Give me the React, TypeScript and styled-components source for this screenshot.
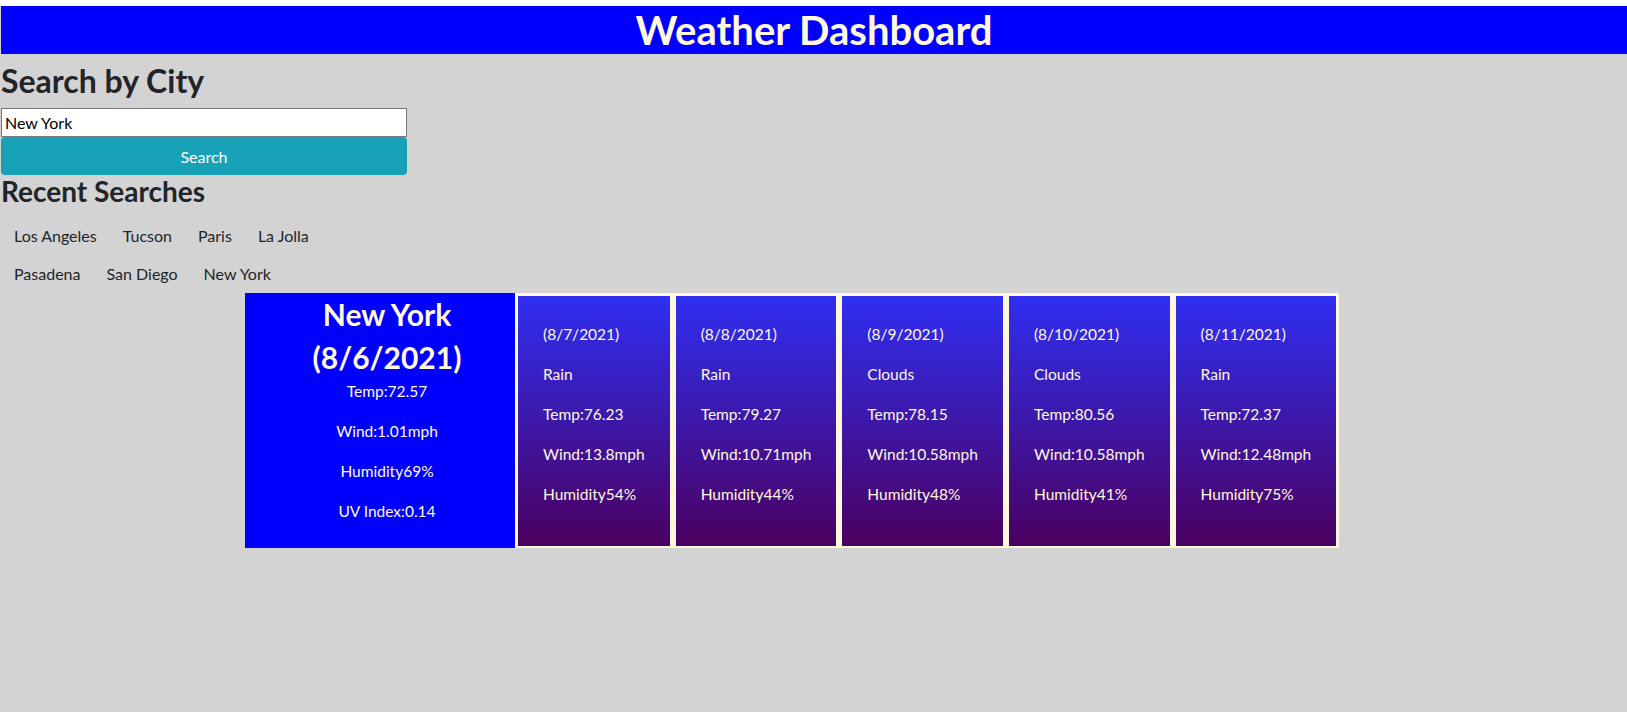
import styled, { createGlobalStyle } from "styled-components";

const GlobalStyle = createGlobalStyle`
  html, body {
    margin: 0;
    background: #ffffff;
  }
  body {
    font-family: Lato, "Open Sans", sans-serif;
    font-size: 16px;
    line-height: 1.5;
    color: #212529;
  }
`;

const Page = styled.div`
  margin-top: 6px;
  padding-left: 1px;
  min-height: calc(100vh - 6px);
  background: lightgrey;
  display: flow-root;
`;

const Header = styled.header`
  background: #0000ff;
  text-align: center;
`;

const Title = styled.h1`
  margin: 0;
  font-size: 40px;
  line-height: 48px;
  font-weight: 700;
  color: #fff8dc;
`;

const SearchColumn = styled.section`
  width: 406px;
  padding-top: 8px;
`;

const SectionTitle = styled.h2<{ $size: number }>`
  margin: 0 0 8px;
  font-size: ${(p) => p.$size}px;
  line-height: 1.2;
  font-weight: 700;
  color: #212529;
`;

const CityInput = styled.input`
  display: block;
  box-sizing: border-box;
  width: 100%;
  height: 29px;
  margin: 0;
  padding: 1px 3px;
  border: 1px solid #767676;
  font-family: Lato, "Open Sans", sans-serif;
  font-size: 16px;
  color: #000;
  background: #fff;
`;

const SearchButton = styled.button`
  display: block;
  width: 100%;
  height: 38px;
  border: 0;
  border-radius: 4px;
  background: #17a2b8;
  color: #fff;
  font-family: inherit;
  font-size: 16px;
`;

const RecentList = styled.div`
  display: flex;
  flex-wrap: wrap;
`;

const RecentButton = styled.button`
  height: 38px;
  padding: 6px 12px;
  border: 1px solid transparent;
  background: transparent;
  color: #212529;
  font-family: inherit;
  font-size: 16px;
  line-height: 24px;
`;

const WeatherRow = styled.div`
  display: flex;
  margin-left: 244px;
`;

const TodayCard = styled.div`
  width: 270px;
  box-sizing: border-box;
  padding-left: 14px;
  background: #0000ff;
  color: #fff8dc;
  text-align: center;
`;

const TodayTitle = styled.h2`
  margin: 0;
  font-size: 30px;
  line-height: 43px;
  font-weight: 700;
`;

const Line = styled.p`
  margin: 0 0 16px;
  line-height: 24px;
  font-size: 15.5px;
`;

const Forecast = styled.div`
  display: flex;
  background: #fff8dc;
`;

const ForecastCard = styled.div`
  margin: 3px 3px 2px;
  padding: 26px 25px 8px;
  padding-bottom: 24px;
  background: linear-gradient(to bottom, #2f2ff2, #4b005f);
  color: #fff8dc;
`;

const today = {
  city: "New York",
  date: "(8/6/2021)",
  temp: "72.57",
  wind: "1.01",
  humidity: "69",
  uv: "0.14",
};

const days = [
  { date: "(8/7/2021)", sky: "Rain", temp: "76.23", wind: "13.8", humidity: "54" },
  { date: "(8/8/2021)", sky: "Rain", temp: "79.27", wind: "10.71", humidity: "44" },
  { date: "(8/9/2021)", sky: "Clouds", temp: "78.15", wind: "10.58", humidity: "48" },
  { date: "(8/10/2021)", sky: "Clouds", temp: "80.56", wind: "10.58", humidity: "41" },
  { date: "(8/11/2021)", sky: "Rain", temp: "72.37", wind: "12.48", humidity: "75" },
];

const recent = ["Los Angeles", "Tucson", "Paris", "La Jolla", "Pasadena", "San Diego", "New York"];

export default function App() {
  return (
    <>
      <GlobalStyle />
      <Page>
        <Header>
          <Title>Weather Dashboard</Title>
        </Header>
        <SearchColumn>
          <SectionTitle $size={32}>Search by City</SectionTitle>
          <CityInput defaultValue="New York" />
          <SearchButton>Search</SearchButton>
          <SectionTitle $size={28}>Recent Searches</SectionTitle>
          <RecentList>
            {recent.map((city) => (
              <RecentButton key={city}>{city}</RecentButton>
            ))}
          </RecentList>
        </SearchColumn>
        <WeatherRow>
          <TodayCard>
            <TodayTitle>{today.city}</TodayTitle>
            <TodayTitle>{today.date}</TodayTitle>
            <Line>Temp:{today.temp}</Line>
            <Line>Wind:{today.wind}mph</Line>
            <Line>Humidity{today.humidity}%</Line>
            <Line>UV Index:{today.uv}</Line>
          </TodayCard>
          <Forecast>
            {days.map((d) => (
              <ForecastCard key={d.date}>
                <Line>{d.date}</Line>
                <Line>{d.sky}</Line>
                <Line>Temp:{d.temp}</Line>
                <Line>Wind:{d.wind}mph</Line>
                <Line>Humidity{d.humidity}%</Line>
              </ForecastCard>
            ))}
          </Forecast>
        </WeatherRow>
      </Page>
    </>
  );
}
